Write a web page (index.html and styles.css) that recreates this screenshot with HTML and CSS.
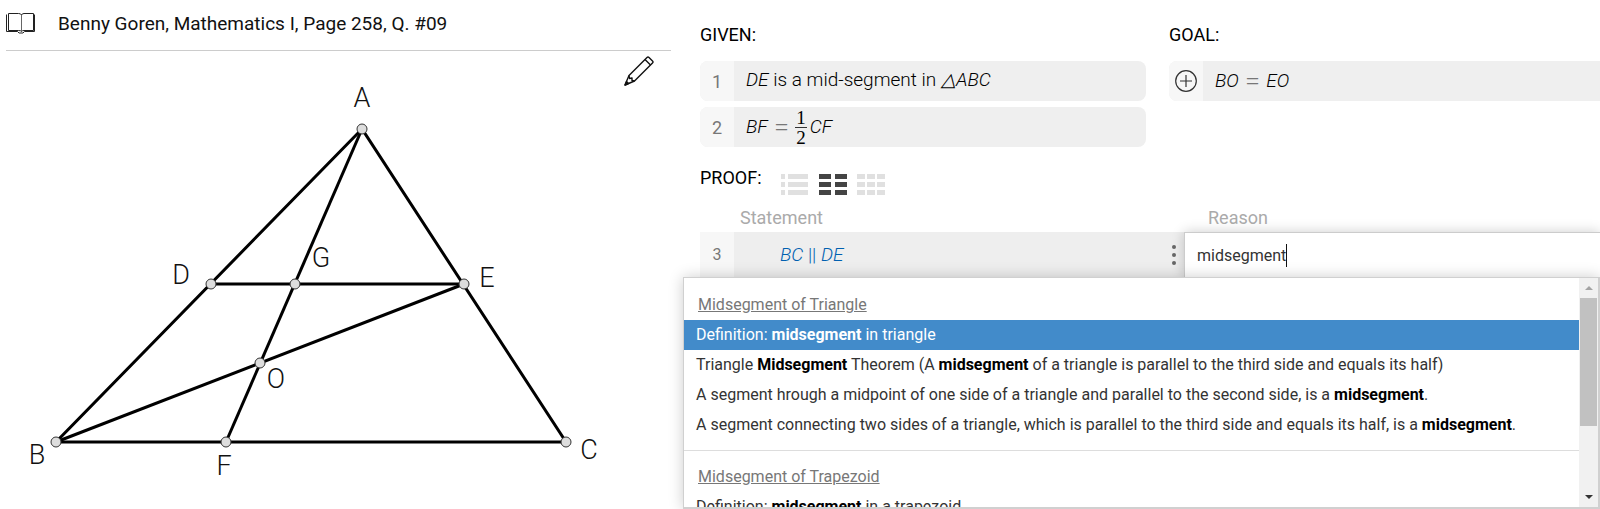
FILE: index.html
```html
<!DOCTYPE html>
<html lang="en">
<head>
  <meta charset="UTF-8" />
  <meta name="viewport" content="width=device-width, initial-scale=1.0"/>
  <title>Geometry Proof</title>
  <link rel="stylesheet" href="styles.css">
</head>
<body>
  <main class="workspace">
    <section class="question">
      <header class="question-header">
        <svg class="book-icon" viewBox="0 0 30 22" width="30" height="22" fill="none" stroke="#222">
          <path d="M2.5 1.5H12.5Q15 1.5 15.5 3Q16 1.5 18 1.5H27.5V18.5H18Q16 18.5 15.5 19.5Q15 18.5 12.5 18.5H2.5Z"/>
          <path d="M15.5 3V19" stroke="#666"/>
          <path d="M.5 2.5V19.5H11.5L13 21H17L18.5 19.5H28.5V2.5"/>
        </svg>
        <h1>Benny Goren, Mathematics I, Page 258, Q. #09</h1>
      </header>

      <div class="figure">
        <button type="button" class="edit-btn" aria-label="Edit drawing">
          <svg viewBox="0 0 30 30" width="30" height="30" fill="none" stroke="#111" stroke-width="1.4" stroke-linejoin="round">
            <path d="M1 29L5 19.5L23 1.5Q24 .5 25 1.5L28.5 5Q29.5 6 28.5 7L10.5 25Z"/>
            <path d="M21 3.5L26.5 9M5 19.5L5.5 22.5L8 22L8 24.5L10.5 25"/>
            <path d="M1 29L2.5 25.5L4.5 27.5Z" fill="#111"/>
          </svg>
        </button>
        <svg class="drawing" viewBox="0 0 665 458">
          <g class="lines">
            <path d="M356 78L50 391H560Z"/>
            <path d="M205 233H458"/>
            <path d="M356 78L220 391"/>
            <path d="M50 391L458 233"/>
          </g>
          <g class="points">
            <circle cx="356" cy="78" r="5"/>
            <circle cx="50" cy="391" r="5"/>
            <circle cx="560" cy="391" r="5"/>
            <circle cx="205" cy="233" r="5"/>
            <circle cx="458" cy="233" r="5"/>
            <circle cx="220" cy="391" r="5"/>
            <circle cx="289" cy="233" r="5"/>
            <circle cx="254" cy="312" r="5"/>
          </g>
          <g class="labels">
            <text x="356" y="56">A</text>
            <text x="31" y="413">B</text>
            <text x="583" y="408">C</text>
            <text x="175" y="233">D</text>
            <text x="481" y="236">E</text>
            <text x="218" y="424">F</text>
            <text x="315" y="216">G</text>
            <text x="270" y="337">O</text>
          </g>
        </svg>
      </div>
    </section>

    <section class="solution">
      <div class="facts">
        <div class="given">
          <h2>GIVEN:</h2>
          <div class="fact">
            <span class="fact-num">1</span>
            <span class="fact-text"><i>DE</i> is a mid-segment in <i>△ABC</i></span>
          </div>
          <div class="fact">
            <span class="fact-num">2</span>
            <span class="fact-text equation"><i>BF</i> <span class="eq">=</span> <span class="fraction"><span>1</span><span>2</span></span><i>CF</i></span>
          </div>
        </div>
        <div class="goal">
          <h2>GOAL:</h2>
          <div class="fact">
            <button type="button" class="fact-num add-btn" aria-label="Add goal">
              <svg viewBox="0 0 22 22" width="22" height="22" fill="none" stroke="#333" stroke-width="1.2">
                <circle cx="11" cy="11" r="10.3"/>
                <path d="M11 5V17M5 11H17"/>
              </svg>
            </button>
            <span class="fact-text equation"><i>BO</i> <span class="eq">=</span> <i>EO</i></span>
          </div>
        </div>
      </div>

      <div class="proof">
        <div class="proof-bar">
          <h2>PROOF:</h2>
          <button type="button" class="view-btn" aria-label="List view">
            <svg viewBox="0 0 28 21" width="28" height="21">
              <path d="M0 0h4v5h-4zM7 0h20v5h-20zM0 8h4v5h-4zM7 8h20v5h-20zM0 16h4v5h-4zM7 16h20v5h-20z"/>
            </svg>
          </button>
          <button type="button" class="view-btn active" aria-label="Two column view">
            <svg viewBox="0 0 28 21" width="28" height="21">
              <path d="M0 0h12v5h-12zM16 0h12v5h-12zM0 8h12v5h-12zM16 8h12v5h-12zM0 16h12v5h-12zM16 16h12v5h-12z"/>
            </svg>
          </button>
          <button type="button" class="view-btn" aria-label="Three column view">
            <svg viewBox="0 0 28 21" width="28" height="21">
              <path d="M0 0h8v5h-8zM10 0h8v5h-8zM20 0h8v5h-8zM0 8h8v5h-8zM10 8h8v5h-8zM20 8h8v5h-8zM0 16h8v5h-8zM10 16h8v5h-8zM20 16h8v5h-8z"/>
            </svg>
          </button>
        </div>

        <table class="proof-table">
          <thead>
            <tr>
              <th class="col-num"></th>
              <th class="col-statement">Statement</th>
              <th class="col-reason">Reason</th>
            </tr>
          </thead>
          <tbody>
            <tr>
              <td class="step-num">3</td>
              <td class="step-statement">
                <div class="statement">
                  <span><i>BC</i> || <i>DE</i></span>
                  <button type="button" class="menu-btn" aria-label="Step menu">
                    <svg viewBox="0 0 6 20" width="6" height="20" fill="#666">
                      <circle cx="3" cy="2" r="2"/>
                      <circle cx="3" cy="10" r="2"/>
                      <circle cx="3" cy="18" r="2"/>
                    </svg>
                  </button>
                </div>
              </td>
              <td class="step-reason">
                <div class="reason-box">
                  <input type="text" id="reason" aria-label="Reason" value="midsegment" />
                  <span class="caret"></span>
                </div>
              </td>
            </tr>
          </tbody>
        </table>

        <div class="suggestions">
          <div class="suggestion-list">
            <div class="group">
              <h3>Midsegment of Triangle</h3>
              <ul>
                <li class="selected">Definition: <b>midsegment</b> in triangle</li>
                <li>Triangle <b>Midsegment</b> Theorem (A <b>midsegment</b> of a triangle is parallel to the third side and equals its half)</li>
                <li>A segment hrough a midpoint of one side of a triangle and parallel to the second side, is a <b>midsegment</b>.</li>
                <li>A segment connecting two sides of a triangle, which is parallel to the third side and equals its half, is a <b>midsegment</b>.</li>
              </ul>
            </div>
            <div class="group">
              <h3>Midsegment of Trapezoid</h3>
              <ul>
                <li>Definition: <b>midsegment</b> in a trapezoid</li>
              </ul>
            </div>
          </div>
          <div class="scrollbar">
            <span class="arrow up"></span>
            <span class="thumb"></span>
            <span class="arrow down"></span>
          </div>
        </div>
      </div>
    </section>
  </main>
</body>
</html>
```
FILE: styles.css
```css
* {
  box-sizing: border-box;
}
body {
  margin: 0;
  font-family: Roboto, "Liberation Sans", sans-serif;
  font-size: 18px;
  color: #222;
  background: white;
  overflow: hidden;
}
h1, h2, h3, ul {
  margin: 0;
  padding: 0;
  font-weight: 400;
}
button {
  border: none;
  padding: 0;
  background: none;
  cursor: pointer;
}
svg {
  display: block;
}
.workspace {
  display: grid;
  grid-template-columns: 683fr 917fr;
}

/* left side */
.question {
  padding: 0 12px 0 6px;
}
.question-header {
  display: flex;
  align-items: center;
  gap: 22px;
  height: 51px;
  padding-bottom: 4px;
  border-bottom: 1px solid #ccc;
}
h1 {
  font-size: 19px;
  color: #111;
}
.figure {
  position: relative;
}
.edit-btn {
  position: absolute;
  top: 5px;
  right: 17px;
}
.drawing {
  width: 100%;
}
.lines {
  fill: none;
  stroke: black;
  stroke-width: 3px;
}
.points {
  fill: #ddd;
  stroke: #333;
  stroke-width: 1px;
}
.labels {
  font-size: 27px;
  font-weight: 300;
  text-anchor: middle;
  fill: #111;
}

/* right side */
.solution {
  padding: 22px 0 0 17px;
}
.facts {
  display: grid;
  grid-template-columns: 446fr 431fr;
  gap: 23px;
}
h2 {
  font-size: 18px;
  line-height: 26px;
  color: #000;
}
.given h2, .goal h2 {
  margin-bottom: 13px;
}
.fact {
  display: flex;
  height: 40px;
  margin-bottom: 6px;
  border-radius: 8px;
  background: #efefef;
  overflow: hidden;
}
.goal .fact {
  border-radius: 8px 0 0 8px;
}
.fact-num {
  display: flex;
  align-items: center;
  justify-content: center;
  width: 34px;
  background: #f7f7f7;
  color: #777;
}
.fact-text {
  padding-left: 12px;
  font-size: 19px;
  font-weight: 300;
  line-height: 38px;
  color: #000;
}
.equation {
  display: flex;
  align-items: center;
  gap: 7px;
}
.eq {
  font-family: "Liberation Serif", serif;
  font-size: 24px;
  color: #777;
}
.fraction {
  display: flex;
  flex-direction: column;
  font-family: "Liberation Serif", serif;
  line-height: 19px;
  margin-right: -4px;
}
.fraction span {
  padding: 0 1px;
}
.fraction span:first-child {
  border-bottom: 1px solid #333;
}
.proof {
  position: relative;
  margin-top: 12px;
}
.proof-bar {
  display: flex;
  gap: 10px;
  height: 42px;
}
.proof-bar h2 {
  margin-right: 9px;
}
.view-btn {
  height: 38px;
  fill: #e0e0e0;
}
.view-btn.active {
  fill: #444;
}
.proof-table {
  width: 100%;
  table-layout: fixed;
  border-collapse: collapse;
}
th {
  height: 25px;
  padding: 0 0 4px;
  line-height: 21px;
  text-align: left;
  font-weight: 400;
  color: #aaa;
}
td {
  height: 45px;
  padding: 0;
}
.col-num {
  width: 34px;
}
.col-statement {
  width: 50%;
  padding-left: 6px;
}
.col-reason {
  padding-left: 24px;
}
.step-num {
  text-align: center;
  font-size: 16px;
  background: #f7f7f7;
  color: #777;
}
.step-statement {
  background: #eee;
}
.statement {
  display: flex;
  align-items: center;
  justify-content: space-between;
  padding: 0 7px 0 46px;
  font-size: 19px;
  font-weight: 300;
  color: #0060b0;
}
.reason-box {
  display: flex;
  align-items: center;
  height: 45px;
  padding-left: 12px;
  border: 1px solid #ccc;
  border-width: 1px 0 0 1px;
  background: white;
  box-shadow: 0 0 12px rgba(0, 0, 0, 0.2);
}
.reason-box input {
  field-sizing: content;
  border: none;
  outline: none;
  padding: 0;
  font: 16px Roboto, sans-serif;
  color: #333;
}
.caret {
  width: 1px;
  height: 23px;
  background: #111;
}

/* autocomplete list */
.suggestions {
  position: absolute;
  top: 100%;
  left: -17px;
  right: 0;
  display: flex;
  height: 232px;
  border: 2px solid #d0d0d0;
  border-width: 1px 2px 2px 1px;
  background: white;
  box-shadow: 0 0 14px rgba(0, 0, 0, 0.2);
}
.suggestion-list {
  flex: 1;
  overflow: hidden;
}
.group {
  padding: 12px 0 10px;
}
.group + .group {
  padding-top: 11px;
  border-top: 1px solid #ddd;
}
h3 {
  padding-left: 14px;
  font-size: 16px;
  line-height: 30px;
  color: #777;
  text-decoration: underline;
}
li {
  list-style: none;
  padding-left: 12px;
  font-size: 16px;
  line-height: 30px;
  white-space: nowrap;
  color: #333;
}
li b {
  font-weight: 700;
  color: #000;
}
li.selected, li.selected b {
  background: #428bca;
  color: white;
}
.scrollbar {
  display: flex;
  flex-direction: column;
  align-items: center;
  width: 19px;
  padding: 8px 1px 8px;
  background: #f1f1f1;
}
.arrow {
  border: 4px solid transparent;
}
.arrow.up {
  border-top: none;
  border-bottom-color: #a3a3a3;
}
.arrow.down {
  margin-top: auto;
  border-bottom: none;
  border-top-color: #333;
}
.thumb {
  width: 17px;
  height: 128px;
  margin-top: 8px;
  background: #c1c1c1;
}
```
